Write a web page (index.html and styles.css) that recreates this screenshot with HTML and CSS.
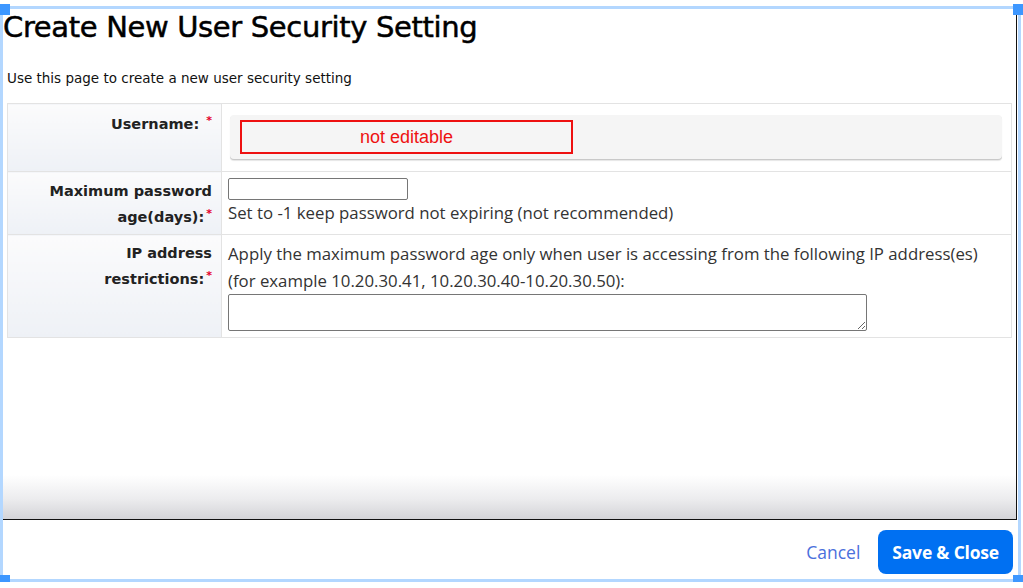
FILE: index.html
```html
<!DOCTYPE html>
<html>
<head>
<meta charset="utf-8">
<title>Create New User Security Setting</title>
<link rel="stylesheet" href="styles.css">
</head>
<body>
<div class="stage">
  <div class="content">
    <h1 class="title">Create New User Security Setting</h1>
    <p class="intro">Use this page to create a new user security setting</p>
    <table class="form">
      <tr class="row-user">
        <th class="label"><span class="line">Username: <span class="req">*</span></span></th>
        <td class="value">
          <div class="readonly-box">
            <div class="note">not editable</div>
          </div>
        </td>
      </tr>
      <tr class="row-age">
        <th class="label"><span class="line">Maximum password</span><span class="line">age(days):<span class="req">*</span></span></th>
        <td class="value">
          <input class="text-input" type="text">
          <div class="hint">Set to -1 keep password not expiring (not recommended)</div>
        </td>
      </tr>
      <tr class="row-ip">
        <th class="label"><span class="line">IP address</span><span class="line">restrictions:<span class="req">*</span></span></th>
        <td class="value">
          <div class="hint ip-hint">Apply the maximum password age only when user is accessing from the following IP address(es) (for example 10.20.30.41, 10.20.30.40-10.20.30.50):</div>
          <textarea class="area"></textarea>
        </td>
      </tr>
    </table>
    <div class="spacer"></div>
  </div>
  <div class="footer">
    <a class="cancel" href="#">Cancel</a>
    <button class="save" type="button">Save &amp; Close</button>
  </div>
  <span class="handle h-tl"></span>
  <span class="handle h-tr"></span>
  <span class="handle h-bl"></span>
  <span class="handle h-br"></span>
</div>
</body>
</html>
```

FILE: styles.css
```css
html, body {
  margin: 0;
  padding: 0;
  background: #ffffff;
}

.stage {
  position: relative;
  box-sizing: border-box;
  width: 1021px;
  height: 576px;
  margin-top: 6px;
  border: 3px solid #b3d7ff;
  padding-right: 1px;
  display: flex;
  flex-direction: column;
  background: #fff;
}

.content {
  flex: 0 0 511px;
  box-sizing: border-box;
  border-right: 1px solid #111;
  border-bottom: 1px solid #111;
  background: linear-gradient(to bottom, #ffffff 0, #ffffff 466px, #ececee 490px, #d4d4d8 510px);
  display: flex;
  flex-direction: column;
}

.title {
  margin: 0;
  padding: 1px 0 0 0;
  font-family: "DejaVu Sans", sans-serif;
  font-weight: normal;
  font-size: 29px;
  line-height: 34px;
  color: #000;
  letter-spacing: -0.35px;
  -webkit-text-stroke: 0.5px #000;
}

.intro {
  margin: 26px 0 0 4px;
  font-family: "DejaVu Sans", sans-serif;
  font-size: 13.5px;
  line-height: 16px;
  color: #111;
}

.form {
  margin: 17px 0 0 4px;
  width: 1005px;
  border-collapse: collapse;
  table-layout: fixed;
}

.form th, .form td {
  border: 1px solid #e3e3e3;
  vertical-align: top;
  box-sizing: border-box;
}

.label {
  width: 214px;
  text-align: right;
  padding: 0 9px 0 20px;
  font-family: "DejaVu Sans", sans-serif;
  font-weight: bold;
  font-size: 14.5px;
  line-height: 26px;
  color: #222;
  background: linear-gradient(to bottom, #fbfbfc, #eef1f6);
}

.line {
  display: block;
  white-space: nowrap;
}

.req {
  color: #e5002b;
  font-size: 11px;
  line-height: 10px;
  vertical-align: 5px;
  font-weight: bold;
  margin-left: 2px;
}

.row-user { height: 68px; }
.row-age { height: 63px; }
.row-ip { height: 103px; }

.row-user .label { padding-top: 7px; }
.row-age .label { padding-top: 6px; }
.row-ip .label { padding-top: 5px; }

.value {
  padding: 0 9px 0 6px;
  font-family: "Open Sans", "Noto Sans", sans-serif;
  font-size: 16.8px;
  color: #333;
}

.row-user .value {
  padding: 11px 9px 11px 8px;
}

.readonly-box {
  height: 44px;
  box-sizing: border-box;
  background: #f5f5f5;
  border-radius: 4px;
  box-shadow: 0 1px 0 #c9c9c9, 0 2px 1px #e6e6e6;
  padding: 5px 0 0 10px;
}

.note {
  width: 333px;
  height: 34px;
  box-sizing: border-box;
  border: 2px solid #ee1111;
  color: #ee1111;
  font-family: "Liberation Sans", Arial, sans-serif;
  font-size: 18px;
  line-height: 30px;
  text-align: center;
}

.text-input {
  display: block;
  margin: 6px 0 0 0;
  width: 180px;
  height: 22px;
  box-sizing: border-box;
  border: 1px solid #767676;
  border-radius: 2px;
  padding: 1px 2px;
  background: #fff;
}

.hint {
  line-height: 26px;
  margin-top: 0;
}

.ip-hint {
  margin-top: 5px;
  line-height: 27px;
}

.area {
  display: block;
  margin: 0;
  width: 639px;
  height: 37px;
  box-sizing: border-box;
  border: 1px solid #767676;
  border-radius: 2px;
  resize: both;
  background: #fff;
}

.spacer {
  flex: 1;
}

.footer {
  flex: 1;
  display: flex;
  align-items: flex-start;
  justify-content: flex-end;
  gap: 18px;
  padding: 10px 4px 0 0;
}

.cancel {
  font-family: "Open Sans", "Noto Sans", sans-serif;
  font-size: 17.5px;
  line-height: 44px;
  color: #4a6fdc;
  text-decoration: none;
}

.save {
  height: 44px;
  padding: 0 14px;
  border: none;
  border-radius: 8px;
  background: #0070f2;
  color: #fff;
  font-family: "Open Sans", "Noto Sans", sans-serif;
  font-weight: bold;
  font-size: 17.5px;
  letter-spacing: -0.2px;
}

.handle {
  position: absolute;
  width: 10px;
  height: 11px;
  background: #3d97ff;
}
.h-tl { left: -3px; top: -5px; }
.h-tr { right: -5px; top: -5px; }
.h-bl { left: -3px; bottom: -7px; }
.h-br { right: -5px; bottom: -7px; }
```
